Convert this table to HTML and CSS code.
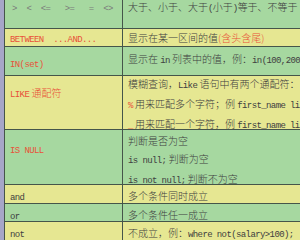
FILE: index.html
```html
<!DOCTYPE html>
<html>
<head>
<meta charset="utf-8">
<link rel="stylesheet" href="styles.css">
</head>
<body>
<div class="table">
  <div class="row green r1">
    <div class="cell key ops"><span class="en">&gt;  &lt;  &lt;=   &gt;=   =  &lt;&gt;</span></div>
    <div class="cell val">大于、小于、大于<span class="en">(</span>小于<span class="en">)</span>等于、不等于</div>
  </div>
  <div class="row yellow r2">
    <div class="cell key red"><span class="en">BETWEEN  ...AND...</span></div>
    <div class="cell val">显示在某一区间的值<span class="red">(含头含尾)</span></div>
  </div>
  <div class="row green r3">
    <div class="cell key red"><span class="en">IN(set)</span></div>
    <div class="cell val">显示在 <span class="en">in</span> 列表中的值，例：<span class="en">in(100,200</span></div>
  </div>
  <div class="row yellow r4">
    <div class="cell key red"><span class="en">LIKE</span> 通配符</div>
    <div class="cell val">
      <div class="line">模糊查询，<span class="en">Like</span> 语句中有两个通配符：</div>
      <div class="line"><span class="en red">%</span> 用来匹配多个字符；例 <span class="en">first_name li</span></div>
      <div class="line"><span class="en red">_</span> 用来匹配一个字符，例 <span class="en">first_name li</span></div>
    </div>
  </div>
  <div class="row green r5">
    <div class="cell key red"><span class="en">IS NULL</span></div>
    <div class="cell val">
      <div class="line">判断是否为空</div>
      <div class="line"><span class="en">is null;</span> 判断为空</div>
      <div class="line"><span class="en">is not null;</span> 判断不为空</div>
    </div>
  </div>
  <div class="row yellow r6">
    <div class="cell key"><span class="en">and</span></div>
    <div class="cell val">多个条件同时成立</div>
  </div>
  <div class="row green r7">
    <div class="cell key"><span class="en">or</span></div>
    <div class="cell val">多个条件任一成立</div>
  </div>
  <div class="row yellow r8">
    <div class="cell key"><span class="en">not</span></div>
    <div class="cell val">不成立，例：<span class="en">where not(salary&gt;100);</span></div>
  </div>
</div>
</body>
</html>
```
FILE: styles.css
```css
html, body {
  margin: 0;
  padding: 0;
  background: #a6a6c8;
  overflow: hidden;
}
.table {
  margin-left: 4px;
  width: 296px;
  border-left: 1px solid #45554a;
  font-family: "Noto Sans CJK SC", sans-serif;
  font-size: 10px;
  font-weight: 300;
  color: #404040;
}
.row {
  display: grid;
  grid-template-columns: 118px 1fr;
  border-bottom: 1px solid #45554a;
}
.green { background: #a6d8a0; }
.yellow { background: #e6e792; }
.cell {
  line-height: 18px;
  white-space: nowrap;
  overflow-x: clip;
  min-width: 0;
}
.key {
  border-right: 1px solid #45554a;
  padding-left: 5px;
}
.val {
  padding-left: 5px;
}
.en {
  font-family: "Liberation Mono", monospace;
  font-size: 9px;
  font-weight: 400;
  letter-spacing: -0.6px;
  white-space: pre;
}
.red, .red .en { color: #e8523a; }
.ops {
  padding-left: 7px;
  color: #7a7a7a;
}
.r1 { height: 28px; }
.r1 .cell { line-height: 14px; }
.r2 { height: 17px; }
.r3 { height: 28px; }
.r3 .key { padding-top: 7px; }
.r3 .val { padding-top: 3px; }
.r4 { height: 53px; }
.r4 .key { padding-top: 8px; }
.r4 .val { margin-top: -1px; }
.r5 { height: 54px; }
.r5 .key { padding-top: 10px; }
.r5 .val { padding-top: 2px; }
.r6 { height: 18px; }
.r6 .cell { padding-top: 2px; }
.r7 { height: 17px; }
.r7 .cell { padding-top: 2px; }
.r8 { height: 30px; }
.r8 .cell { padding-top: 2px; }
```
